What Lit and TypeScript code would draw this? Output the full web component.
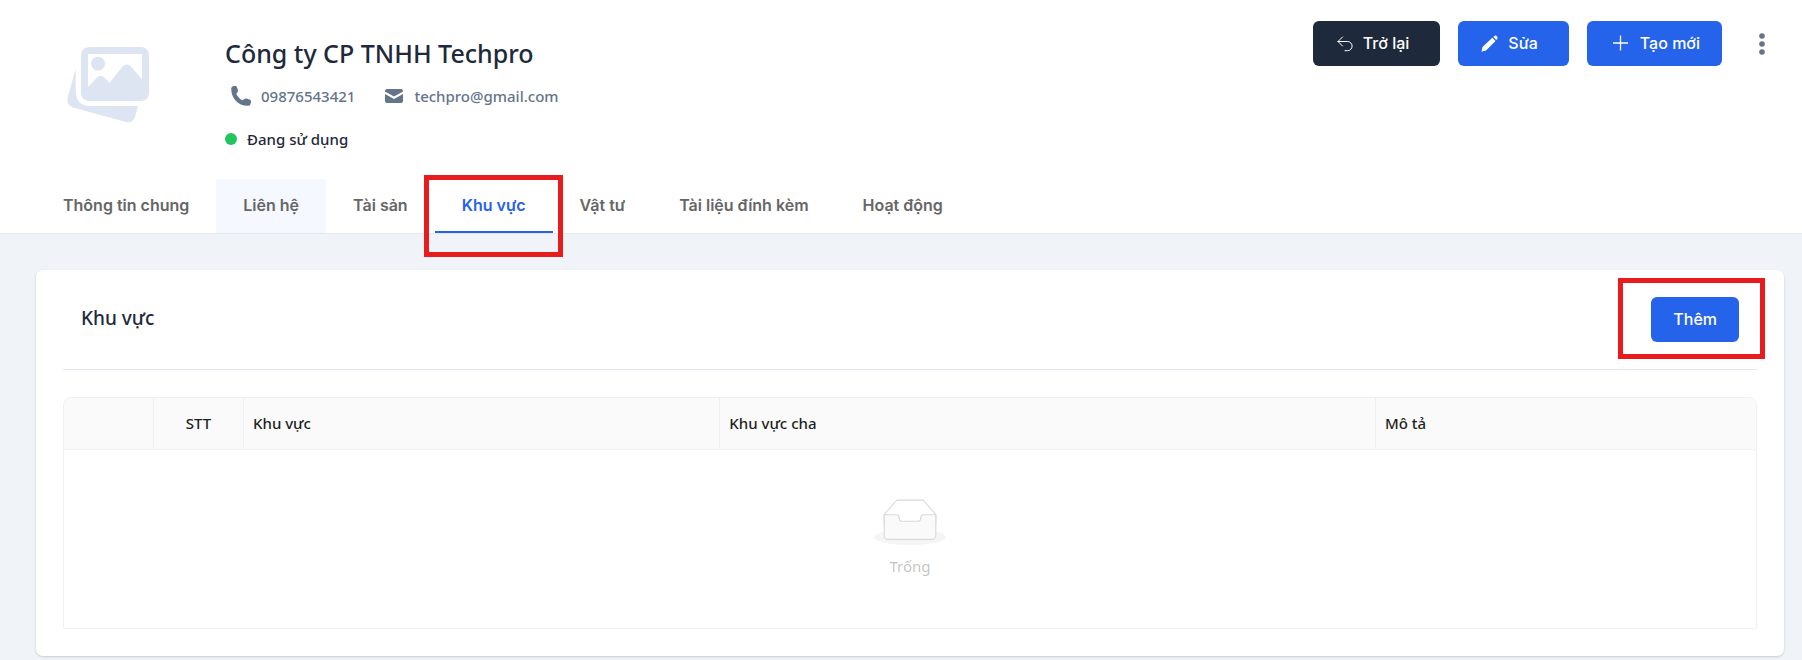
import { LitElement, html, css } from "lit";
import { customElement, state } from "lit/decorators.js";

const TABS = ["Thông tin chung", "Liên hệ", "Tài sản", "Khu vực", "Vật tư", "Tài liệu đính kèm", "Hoạt động"];

@customElement("app-root")
export class AppRoot extends LitElement {
  static styles = css`
    :host {
      --ui: "Segoe UI", "Noto Sans", sans-serif;
      --control: Inter, sans-serif;
      --blue: #2563eb;
      --slate: #64748b;
      --ink: #1e293b;
      --line: #e2e8f0;
      --grid: #f0f0f0;
      display: block;
      box-sizing: border-box;
      min-height: 100vh;
      background: #f0f4f9;
      color: var(--ink);
      font: 15px/24px var(--ui);
    }
    *, *::before, *::after { box-sizing: border-box; }
    h1, h2, p { margin: 0; }
    button { font: 500 16px/24px var(--control); border: 0; cursor: pointer; }
    .header { background: #fff; border-bottom: 1px solid var(--line); padding: 0 18px 0 36px; }
    .top { display: flex; align-items: flex-start; justify-content: space-between; }
    .profile { display: flex; gap: 75px; padding: 35px 0 0 31px; }
    .photo { display: block; width: 83px; height: 78px; margin-top: 10px; }
    .info { display: flex; flex-direction: column; }
    .name { font-size: 25px; line-height: 36px; font-weight: 500; }
    .contact { display: flex; align-items: center; gap: 28px; margin-top: 13px; padding-left: 5px; color: var(--slate); font-weight: 500; }
    .contact a { display: flex; align-items: center; gap: 9px; color: inherit; text-decoration: none; }
    .status { display: flex; align-items: center; gap: 10px; margin-top: 19px; font-weight: 500; }
    .dot { width: 12px; height: 12px; border-radius: 50%; background: #22c55e; }
    .actions { display: flex; align-items: center; gap: 18px; padding-top: 21px; }
    .btn { display: flex; align-items: center; gap: 9px; height: 45px; padding: 0 31px 2px 23px; border-radius: 6px; background: var(--blue); color: #fff; white-space: nowrap; }
    .btn.dark { background: var(--ink); }
    .btn.even { padding-left: 22px; padding-right: 22px; }
    .more { display: flex; align-items: center; justify-content: center; width: 44px; height: 45px; padding: 0; background: none; }
    .tabs { display: flex; margin-top: 28px; }
    .tab { position: relative; height: 54px; padding: 0 27px 2px; background: none; color: #666; font-weight: 600; white-space: nowrap; }
    .tab.hover, .tab:hover { background: #f5f9ff; }
    .tab.active { color: var(--blue); border-bottom: 2px solid var(--blue); padding-bottom: 0; background: none; }
    .mark { position: absolute; border: 5px solid #e81c1c; pointer-events: none; }
    .mark.on-tab { inset: -4px -10px -26px -11px; }
    .mark.on-add { inset: -19px -26px -17px -33px; }
    .content { padding: 36px 18px 4px 36px; }
    .card { background: #fff; border-radius: 7px; padding: 0 27px 27px; box-shadow: 0 1px 3px rgba(15, 23, 42, 0.12), 0 1px 2px rgba(15, 23, 42, 0.06); }
    .card-head { display: flex; align-items: center; justify-content: space-between; height: 100px; padding: 0 18px; border-bottom: 1px solid var(--line); }
    .card-title { font-size: 19px; line-height: 28px; padding-bottom: 4px; font-weight: 500; }
    .add { position: relative; display: flex; }
    .grid { width: 100%; margin-top: 27px; table-layout: fixed; border-collapse: separate; border-spacing: 0; border: 1px solid var(--grid); border-radius: 8px 8px 0 0; }
    .grid th { height: 52px; padding: 0 9px 2px; background: #fafafa; border-right: 1px solid var(--grid); border-bottom: 1px solid var(--grid); text-align: left; font-weight: 500; color: #1f1f1f; }
    .grid th:first-child { border-top-left-radius: 7px; }
    .grid th:last-child { border-right: 0; border-top-right-radius: 7px; }
    .grid th.center { text-align: center; }
    .grid .narrow { width: 90px; }
    .grid .area { width: 28.15%; }
    .grid .parent { width: 38.75%; }
    .none { height: 178px; padding: 0 0 2px; vertical-align: middle; text-align: center; color: rgba(0, 0, 0, 0.25); }
    .none svg { display: block; width: 72px; height: 46px; margin: 0 auto 9px; }
  `;

  @state() private active = 3;

  render() {
    return html`
      <header class="header">
        <div class="top">
          <div class="profile">
            <svg class="photo" viewBox="0 0 83 78" fill="#dde4f2" aria-hidden="true">
              <path d="M8.700 24L.8 52Q-1 60 6 62.500L59 77Q65.500 78.500 68 72L71 61H22Q8.700 60 8.700 46Z" />
              <path fill-rule="evenodd" d="M23 2H73Q82 2 82 11V47Q82 56 73 56H23Q14 56 14 47V11Q14 2 23 2ZM22 9Q21 9 21 10V42L30 32.500Q34 29.500 38 33L42.500 38L55.500 21.500Q60 17.500 64 21.500L75 34.500V10Q75 9 74 9Z" />
              <circle cx="31" cy="18.700" r="7" />
            </svg>
            <div class="info">
              <h1 class="name">Công ty CP TNHH Techpro</h1>
              <div class="contact">
                <a href="tel:09876543421">
                  <svg width="22" height="22" viewBox="0 0 22 22" fill="#64748b" aria-hidden="true">
                    <path d="M3 1.300Q5.500 .3 6.500 1.500Q7.500 3.500 8 5.500Q8 7 6.500 8.500Q6.300 9.500 7.500 11Q9.500 14 12.500 15.200Q13.200 15.300 14 14.300Q15 13.300 16.500 13.500L20 14.700Q21.300 15.300 21 17L20.500 19.300Q20 20.800 18 20.800Q10.500 21 5.500 15.500Q1.200 10.500 1.200 3.500Q1.300 1.800 3 1.300Z" />
                  </svg>09876543421</a>
                <a href="mailto:techpro@gmail.com">
                  <svg width="22" height="22" viewBox="-1 -1 22 22" fill="#64748b" aria-hidden="true">
                    <path d="M3 3H17Q19 3 19 5V5.500L10 10.500L1 5.500V5Q1 3 3 3ZM1 8L10 13L19 8V15Q19 17 17 17H3Q1 17 1 15Z" />
                  </svg>techpro@gmail.com</a>
              </div>
              <div class="status"><span class="dot"></span>Đang sử dụng</div>
            </div>
          </div>
          <div class="actions">
            <button class="btn dark">
              <svg width="18" height="18" viewBox="0 -1 18 18" fill="none" stroke="#fff" stroke-linecap="round" stroke-linejoin="round" aria-hidden="true"><path d="M6.500 2L2 6.500L6.500 11M2 6.500H11.500A4.600 4.600 0 0 1 11.500 15.700H9" /></svg>
              Trở lại
            </button>
            <button class="btn">
              <svg width="18" height="18" viewBox="0 -1 18 18" fill="#fff" aria-hidden="true"><path d="M.5 16.700L1.500 12L11.300 2.800L14.500 6L5 15.500ZM12.300 2L13.700 .8Q14.800 .2 15.900 1.300Q17 2.500 16.500 3.500L15.300 5Z" /></svg>
              Sửa
            </button>
            <button class="btn even">
              <svg width="22" height="18" viewBox="0 0 22 18" stroke="#fff" stroke-width="1.300" aria-hidden="true"><path d="M11.500 1.500V16.500M4 9H19" /></svg>
              Tạo mới
            </button>
            <button class="more" aria-label="Thêm tùy chọn">
              <svg width="6" height="22" viewBox="0 0 6 22" fill="#64748b"><circle cx="3" cy="3" r="2.800" /><circle cx="3" cy="11" r="2.800" /><circle cx="3" cy="19" r="2.800" /></svg>
            </button>
          </div>
        </div>
        <nav class="tabs" role="tablist">
          ${TABS.map((t, i) => html`<button
            class="tab ${i === this.active ? "active" : ""} ${i === 1 ? "hover" : ""}"
            role="tab" aria-selected=${i === this.active} @click=${() => (this.active = i)}
          >${t}${i === 3 ? html`<span class="mark on-tab"></span>` : ""}</button>`)}
        </nav>
      </header>
      <main class="content">
        <section class="card">
          <div class="card-head">
            <h2 class="card-title">Khu vực</h2>
            <div class="add"><button class="btn even">Thêm</button><span class="mark on-add"></span></div>
          </div>
          <table class="grid">
            <thead>
              <tr>
                <th class="narrow"></th>
                <th class="narrow center">STT</th>
                <th class="area">Khu vực</th>
                <th class="parent">Khu vực cha</th>
                <th>Mô tả</th>
              </tr>
            </thead>
            <tbody>
              <tr>
                <td class="none" colspan="5">
                  <svg viewBox="0 0 64 41" aria-hidden="true">
                    <g transform="translate(0 1)" fill="none" fill-rule="evenodd">
                      <ellipse fill="#f5f5f5" cx="32" cy="33" rx="32" ry="7" />
                      <g fill-rule="nonzero" stroke="#d9d9d9">
                        <path d="M55 12.760L44.854 1.258C44.367.474 43.656 0 42.907 0H21.093c-.749 0-1.460.474-1.947 1.257L9 12.761V22h46v-9.240z" fill="#fff" />
                        <path d="M41.613 15.931c0-1.605.994-2.930 2.227-2.931H55v18.137C55 33.260 53.680 35 52.050 35h-40.100C10.320 35 9 33.259 9 31.137V13h11.160c1.233 0 2.227 1.323 2.227 2.928v.022c0 1.605 1.005 2.901 2.237 2.901h14.752c1.232 0 2.237-1.308 2.237-2.913v-.007z" fill="#fafafa" />
                      </g>
                    </g>
                  </svg>
                  Trống
                </td>
              </tr>
            </tbody>
          </table>
        </section>
      </main>
    `;
  }
}
